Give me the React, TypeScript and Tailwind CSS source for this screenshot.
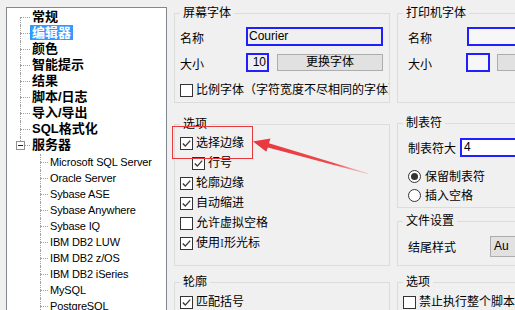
import React from 'react'

const TOP = ['常规', '编辑器', '颜色', '智能提示', '结果', '脚本/日志', '导入/导出', 'SQL格式化', '服务器']
const SERVERS = [
  'Microsoft SQL Server',
  'Oracle Server',
  'Sybase ASE',
  'Sybase Anywhere',
  'Sybase IQ',
  'IBM DB2 LUW',
  'IBM DB2 z/OS',
  'IBM DB2 iSeries',
  'MySQL',
  'PostgreSQL',
  'SQLite',
]

function Check({ checked }: { checked?: boolean }) {
  return (
    <span className="w-[13px] h-[13px] border border-[#333333] bg-white flex items-center justify-center shrink-0">
      {checked && (
        <svg width="11" height="11" viewBox="0 0 11 11">
          <path d="M1.8 5.6 L4.3 8.1 L9.2 2.6" stroke="#3a3a3a" strokeWidth="1.4" fill="none" />
        </svg>
      )}
    </span>
  )
}

function Radio({ checked }: { checked?: boolean }) {
  return (
    <span className="w-[13px] h-[13px] rounded-full border border-[#333333] bg-white flex items-center justify-center shrink-0">
      {checked && <span className="w-[7px] h-[7px] rounded-full bg-[#333333]" />}
    </span>
  )
}

// group box: border line at the top edge, title sits across it
function Group({ title, className, children }: { title: string; className?: string; children: React.ReactNode }) {
  return (
    <div className={`shrink-0 flex flex-col border border-[#dcdcdc] pl-[5px] ${className ?? ''}`}>
      <span className="self-start -mt-[9px] px-[3px] h-[16px] leading-[16px] bg-[#f0f0f0]">{title}</span>
      {children}
    </div>
  )
}

function CheckRow({ label, checked, className }: { label: React.ReactNode; checked?: boolean; className?: string }) {
  return (
    <div className={`h-[20px] flex items-center gap-[3px] whitespace-nowrap overflow-hidden ${className ?? ''}`}>
      <Check checked={checked} />
      <span className="leading-[16px]">{label}</span>
    </div>
  )
}

function Tree() {
  return (
    <div className="ml-[6px] mt-[7px] w-[161px] h-[330px] shrink-0 border border-[#828790] bg-white overflow-hidden pt-[1px]">
      <div className="pl-[13px]">
        {TOP.map((t, i) => (
          <div key={t} className="h-[16px] flex">
            <div className="relative w-[10px] flex flex-col">
              <div className={`h-[8px] ${i > 0 ? 'border-l border-dotted border-[#a0a0a0]' : ''}`} />
              <div
                className={`h-[8px] border-t border-dotted border-[#a0a0a0] ${
                  i < TOP.length - 1 ? 'border-l' : ''
                }`}
              />
              {i === TOP.length - 1 && (
                <span className="absolute left-[-4px] top-[4px] w-[9px] h-[9px] border border-[#919191] bg-white flex items-center justify-center">
                  <span className="w-[5px] h-px bg-[#222222]" />
                </span>
              )}
            </div>
            <span
              className={`px-[2px] h-[15px] text-[13px] leading-[15px] font-bold ${
                i === 1 ? 'bg-[#3399ff] text-white' : 'text-black'
              }`}
            >
              {t}
            </span>
          </div>
        ))}
      </div>
      <div className="pl-[33px] mt-[1px]">
        {SERVERS.map(s => (
          <div key={s} className="h-[16px] flex">
            <div className="w-[8px] flex flex-col">
              <div className="h-[8px] border-l border-dotted border-[#a0a0a0]" />
              <div className="h-[8px] border-l border-t border-dotted border-[#a0a0a0]" />
            </div>
            <span className="ml-[2px] text-[11px] leading-[16px] tracking-[-0.15px] font-['Liberation_Sans',sans-serif] text-black whitespace-nowrap">
              {s}
            </span>
          </div>
        ))}
      </div>
    </div>
  )
}

export default function App() {
  return (
    <div className="relative w-[515px] h-[310px] overflow-hidden bg-[#f0f0f0] flex text-[12px] text-black font-['Liberation_Sans','Noto_Sans_CJK_SC',sans-serif]">
      <Tree />

      <div className="ml-[7px] pt-[13px] flex gap-[7px] shrink-0">
        {/* left column */}
        <div className="w-[216px] shrink-0 flex flex-col">
          <Group title="屏幕字体" className="h-[90px]">
            <div className="mt-[6px] h-[19px] flex items-center">
              <span className="w-[66px] pt-[4px] leading-[16px]">名称</span>
              <div className="w-[137px] h-[19px] border-2 border-[#1f1fff] bg-[#f0f0f0] pl-[1px] leading-[15px]">Courier</div>
            </div>
            <div className="mt-[7px] h-[19px] flex items-center">
              <span className="w-[66px] pt-[4px] leading-[16px]">大小</span>
              <div className="w-[23px] h-[19px] border-2 border-[#1f1fff] bg-[#f0f0f0] pr-[1px] text-right leading-[15px]">10</div>
              <div className="ml-[8px] w-[106px] h-[17px] border border-[#adadad] bg-[#e1e1e1] flex items-center justify-center leading-[15px]">
                更换字体
              </div>
            </div>
            <CheckRow className="mt-[8px]" label="比例字体（字符宽度不尽相同的字体）" />
          </Group>

          <Group title="选项" className="mt-[21px] h-[142px]">
            <div className="mt-[1px]">
              <CheckRow checked label="选择边缘" />
              <CheckRow checked className="pl-[12px]" label="行号" />
              <CheckRow checked label="轮廓边缘" />
              <CheckRow checked label="自动缩进" />
              <CheckRow label="允许虚拟空格" />
              <CheckRow
                checked
                label={
                  <>
                    使用<span className="font-['Liberation_Serif',serif] text-[#2b3a8c]">I</span>形光标
                  </>
                }
              />
            </div>
          </Group>

          <Group title="轮廓" className="mt-[16px] h-[60px]">
            <CheckRow checked className="mt-[2px]" label="匹配括号" />
          </Group>
        </div>

        {/* right column */}
        <div className="w-[140px] shrink-0 flex flex-col">
          <Group title="打印机字体" className="h-[90px]">
            <div className="mt-[6px] h-[19px] flex items-center">
              <span className="ml-[5px] w-[60px] pt-[4px] leading-[16px]">名称</span>
              <div className="w-[70px] h-[19px] border-2 border-[#1f1fff] bg-[#f7f7f7]" />
            </div>
            <div className="mt-[7px] h-[19px] flex items-center">
              <span className="ml-[5px] w-[60px] pt-[4px] leading-[16px]">大小</span>
              <div className="w-[24px] h-[19px] border-2 border-[#1f1fff] bg-[#f7f7f7]" />
              <div className="ml-[7px] w-[40px] h-[17px] border border-[#adadad] bg-[#e1e1e1]" />
            </div>
          </Group>

          <Group title="制表符" className="mt-[20px] h-[85px]">
            <div className="mt-[7px] h-[19px] flex items-center">
              <span className="ml-[5px] w-[55px] pt-[3px] leading-[16px] whitespace-nowrap">制表符大</span>
              <div className="w-[80px] h-[19px] border-2 border-[#1f1fff] bg-white pl-[2px] leading-[15px]">4</div>
            </div>
            <div className="mt-[10px] ml-[5px]">
              <div className="h-[19px] flex items-center gap-[4px]">
                <Radio checked />
                <span className="leading-[16px]">保留制表符</span>
              </div>
              <div className="h-[19px] flex items-center gap-[4px]">
                <Radio />
                <span className="leading-[16px]">插入空格</span>
              </div>
            </div>
          </Group>

          <Group title="文件设置" className="mt-[13px] h-[45px]">
            <div className="mt-[7px] h-[21px] flex items-center">
              <span className="ml-[5px] w-[90px] pt-[3px] leading-[16px]">结尾样式</span>
              <div className="w-[50px] h-[21px] border border-[#adadad] bg-[#e1e1e1] pl-[3px] leading-[19px]">Au</div>
            </div>
          </Group>

          <Group title="选项" className="mt-[16px] h-[60px]">
            <CheckRow className="mt-[2px] w-[140px]" label="禁止执行整个脚本" />
          </Group>
        </div>
      </div>

      {/* red annotation */}
      <div className="absolute left-[172px] top-[126px] w-[81px] h-[33px] border border-[#e8383d] pointer-events-none" />
      <svg className="absolute inset-0 pointer-events-none" width="515" height="310" viewBox="0 0 515 310">
        <defs>
          <linearGradient id="arrowFade" x1="253" y1="141" x2="368" y2="173" gradientUnits="userSpaceOnUse">
            <stop offset="0" stopColor="#e8383d" />
            <stop offset="0.7" stopColor="#ec4a4e" />
            <stop offset="1" stopColor="#f28a8c" stopOpacity="0.4" />
          </linearGradient>
        </defs>
        <polygon
          points="253,141.5 270.5,138.6 269,143.2 368,173.2 367.6,174 267.9,147.4 266.3,151.8"
          fill="url(#arrowFade)"
        />
      </svg>
    </div>
  )
}
